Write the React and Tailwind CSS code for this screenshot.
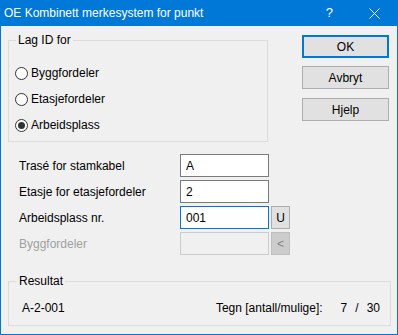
import React from 'react';

const font = { fontFamily: '"Liberation Sans", Arial, sans-serif' };

const Radio = ({ label, checked }) => (
  <div className="flex items-center h-[16px]">
    <span className="w-[13px] h-[13px] rounded-full border border-[#333333] bg-white flex items-center justify-center">
      {checked && <span className="w-[7px] h-[7px] rounded-full bg-[#333333]" />}
    </span>
    <span className="ml-[3px] text-[12px] text-black">{label}</span>
  </div>
);

const Button = ({ children, primary }) => (
  <button
    className={`w-[87px] h-[23px] bg-[#e1e1e1] text-[12px] text-black flex items-center justify-center ${
      primary ? 'border-2 border-[#0078d7]' : 'border border-[#adadad]'
    }`}
  >
    {children}
  </button>
);

const Field = ({ label, value, focused, disabled, btn }) => (
  <div className="flex items-center h-[23px]">
    <span className={`w-[161px] text-[12px] ${disabled ? 'text-[#a0a0a0]' : 'text-black'}`}>{label}</span>
    <div
      className={`w-[89px] h-[23px] px-[5px] flex items-center text-[12px] text-black ${
        disabled
          ? 'bg-[#f0f0f0] border border-[#cccccc]'
          : focused
          ? 'bg-white border border-[#0078d7]'
          : 'bg-white border border-[#7a7a7a]'
      }`}
    >
      {value}
    </div>
    {btn && (
      <div
        className={`ml-[2px] w-[19px] h-[23px] flex items-center justify-center text-[12px] ${
          disabled
            ? 'bg-[#cccccc] border border-[#bfbfbf] text-[#838383]'
            : 'bg-[#e1e1e1] border border-[#adadad] text-black'
        }`}
      >
        {btn}
      </div>
    )}
  </div>
);

export default function App() {
  return (
    <div
      className="w-[398px] h-[335px] bg-[#f0f0f0] border-x border-b border-[#0078d7] flex flex-col overflow-hidden"
      style={font}
    >
      {/* title bar */}
      <div className="h-[26px] -mx-px bg-[#0078d7] flex items-center text-white text-[12px] shrink-0">
        <span className="pl-[4px]">OE Kombinett merkesystem for punkt</span>
        <span className="ml-auto mr-[36px] text-[13px]">?</span>
        <svg width="11" height="11" viewBox="0 0 11 11" className="mr-[18px]">
          <path d="M0.5 0.5L10.5 10.5M10.5 0.5L0.5 10.5" stroke="white" strokeWidth="1" />
        </svg>
      </div>

      <div className="flex-1 px-[7px]">
        <div className="flex mt-[6px]">
          <fieldset className="w-[260px] h-[110px] border border-[#dcdcdc] px-[6px]">
            <legend className="text-[12px] text-black px-[2px] ml-[1px] leading-[16px]">Lag ID for</legend>
            <div className="flex flex-col gap-[10px] mt-[17px]">
              <Radio label="Byggfordeler" />
              <Radio label="Etasjefordeler" />
              <Radio label="Arbeidsplass" checked />
            </div>
          </fieldset>
          <div className="ml-auto mr-[1px] mt-[3px] flex flex-col">
            <Button primary>OK</Button>
            <div className="mt-[8px]"><Button>Avbryt</Button></div>
            <div className="mt-[9px]"><Button>Hjelp</Button></div>
          </div>
        </div>

        <div className="flex flex-col gap-[3px] mt-[12px] ml-[11px]">
          <Field label="Trasé for stamkabel" value="A" />
          <Field label="Etasje for etasjefordeler" value="2" />
          <Field label="Arbeidsplass nr." value="001" focused btn="U" />
          <Field label="Byggfordeler" value="" disabled btn="<" />
        </div>

        <fieldset className="mt-[18px] w-[383px] h-[53px] border border-[#dcdcdc] px-[13px]">
          <legend className="text-[12px] text-black px-[2px] ml-[-5px] leading-[16px]">Resultat</legend>
          <div className="flex items-center text-[12px] text-black mt-[10px]">
            <span>A-2-001</span>
            <span className="ml-auto">Tegn [antall/mulige]:</span>
            <span className="ml-[18px]">7</span>
            <span className="ml-[8px]">/</span>
            <span className="ml-[8px] mr-[-3px]">30</span>
          </div>
        </fieldset>
      </div>
    </div>
  );
}
